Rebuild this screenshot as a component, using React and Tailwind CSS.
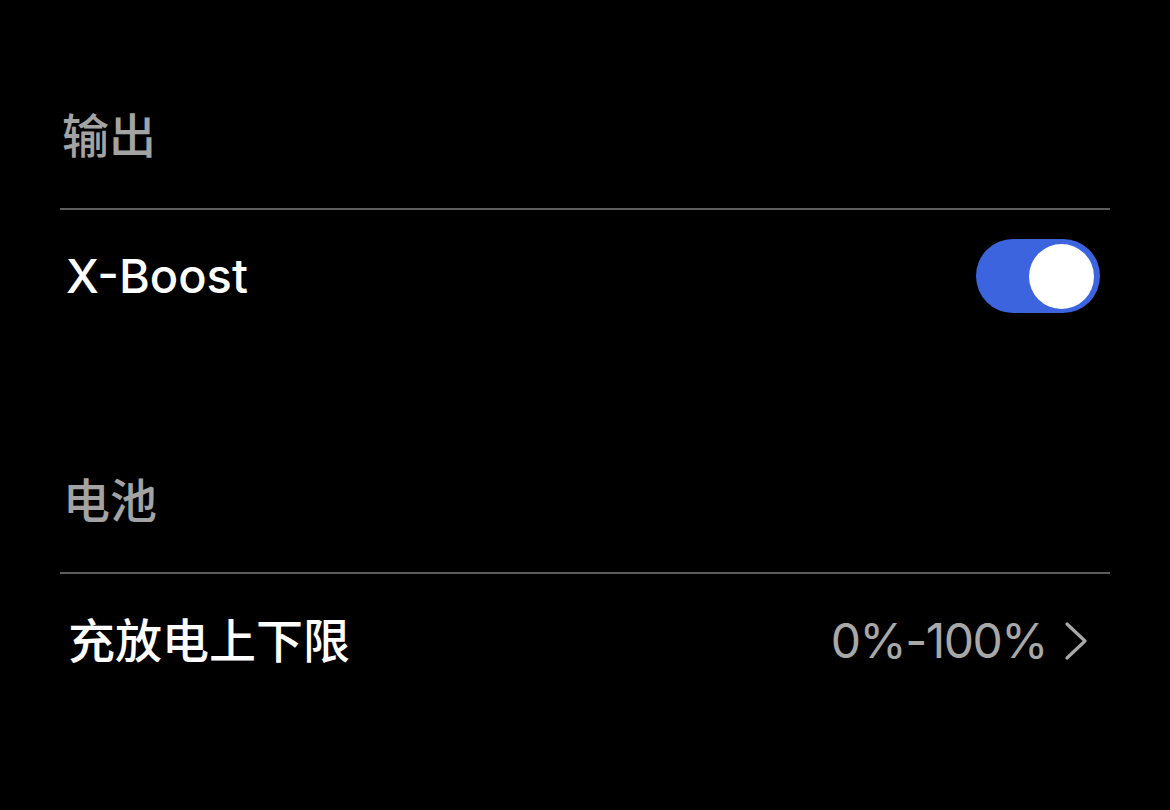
export default function App() {
  const font = { fontFamily: 'Inter, "Noto Sans CJK SC", sans-serif' };
  return (
    <div className="w-[1170px] h-[810px] bg-black overflow-hidden" style={font}>
      <div className="px-[60px] pt-[108px]">
        <section>
          <div className="pl-[2px] pb-[44px] text-[47px] leading-[56px] font-medium text-[#a3a3a3]">输出</div>
          <div className="h-[2px] bg-[#5c5c5c]" />
          <div className="h-[132px] flex items-center justify-between pl-[6px] pr-[10px]">
            <span className="text-[47px] leading-[56px] font-medium text-white">X-Boost</span>
            <div className="w-[124px] h-[74px] rounded-full bg-[#3b64de] flex items-center justify-end pr-[6px]">
              <div className="w-[65px] h-[65px] rounded-full bg-white" />
            </div>
          </div>
        </section>
        <section className="mt-[131px]">
          <div className="pl-[3px] pb-[43px] text-[47px] leading-[56px] font-medium text-[#a3a3a3]">电池</div>
          <div className="h-[2px] bg-[#5c5c5c]" />
          <div className="h-[134px] flex items-center justify-between pl-[8px] pr-[23px]">
            <span className="text-[47px] leading-[56px] font-medium text-white">充放电上下限</span>
            <div className="flex items-center gap-[18px]">
              <span className="text-[48px] leading-[56px] tracking-[-1.5px] text-[#a8a8a8]">0%-100%</span>
              <svg width="22" height="38" viewBox="0 0 22 38" fill="none">
                <path d="M2 2 L20 19 L2 36" stroke="#a8a8a8" strokeWidth="3.2" strokeLinecap="round" strokeLinejoin="round" />
              </svg>
            </div>
          </div>
        </section>
      </div>
    </div>
  );
}
